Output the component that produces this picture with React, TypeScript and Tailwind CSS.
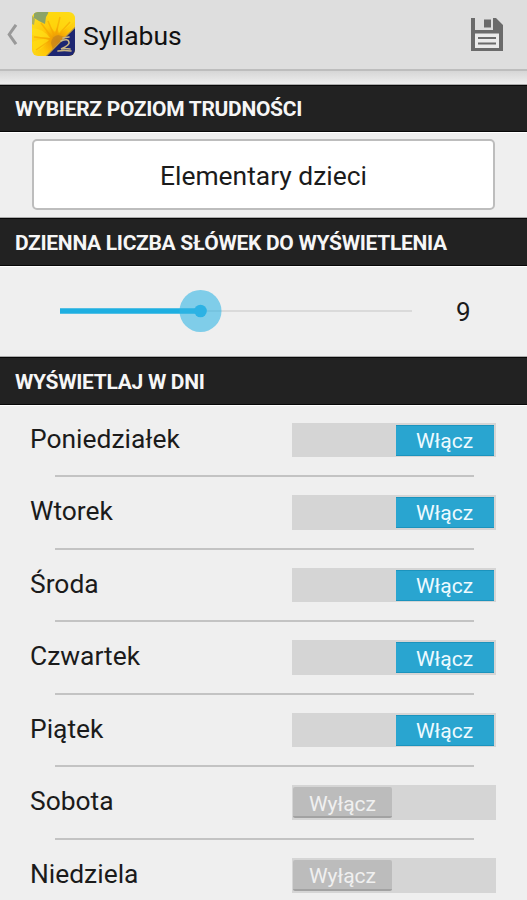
import { useState } from "react";

const initialDays = [
  { name: "Poniedziałek", on: true },
  { name: "Wtorek", on: true },
  { name: "Środa", on: true },
  { name: "Czwartek", on: true },
  { name: "Piątek", on: true },
  { name: "Sobota", on: false },
  { name: "Niedziela", on: false },
];

function SunflowerIcon() {
  return (
    <svg className="mb-[2px] ml-[14px] h-11 w-[43px] shrink-0" viewBox="0 0 43 44" preserveAspectRatio="none">
      <defs>
        <clipPath id="tile"><rect width="43" height="44" rx="6" /></clipPath>
        <radialGradient id="petals" cx="25" cy="29" r="32" gradientUnits="userSpaceOnUse">
          <stop offset="0" stopColor="#d58b0b" />
          <stop offset=".25" stopColor="#f6aa04" />
          <stop offset=".5" stopColor="#ffc808" />
          <stop offset="1" stopColor="#fbdc20" />
        </radialGradient>
      </defs>
      <g clipPath="url(#tile)">
        <rect width="43" height="44" fill="url(#petals)" />
        <path d="M2 0h15l-3 5-1 7-6-3-5-3z" fill="#8ba367" />
        <path d="M0 3l3 4-1 6-2-1z" fill="#b0b060" />
        <path d="M28 0Q38-1 43 5V9L27 22Q24 13 28 0z" fill="#ffdc12" fillOpacity=".7" />
        <path d="M16 0h11q1 10-4 20Q14 12 16 0z" fill="#ffd80d" fillOpacity=".7" />
        <path d="M0 16q12 1 18 10Q9 26 0 23z" fill="#ffe018" fillOpacity=".7" />
        <path d="M0 30q10-5 17-2Q11 37 2 40z" fill="#ffdd12" fillOpacity=".7" />
        <path d="M9 11l12 16M16 9l6 14M28 5l-4 17M38 10L27 22M2 25l18 2M4 38l16-11" fill="none" stroke="#f5a400" strokeWidth="1.5" strokeOpacity=".6" />
        <path d="M19 31q1-7 7-8l7 2-12 13z" fill="#c9851c" fillOpacity=".75" />
        <path d="M43 16v28H15z" fill="#1d2672" />
        <path d="M14 44L43 15" stroke="#b7994d" strokeWidth="1" />
        <path d="M29 29q7-3 8 1 1 3-8 7 4-1 9 0M26 39q6-1 13 0M31 26l6-1" fill="none" stroke="#c9b583" strokeWidth="1.6" strokeLinecap="round" />
      </g>
    </svg>
  );
}

function SaveIcon() {
  return (
    <svg className="h-[33px] w-8" viewBox="0 0 32 33">
      <path fill="#ebebeb" d="M4 15h24v15H4z" />
      <path fillRule="evenodd" fill="#6b6b6b" d="M0 0h4v12h18V0h3l7 7v26H0zM4 15.5h24V30H4z" />
      <path fill="#6b6b6b" d="M13 1.5h7v8h-7zM7 19h18v2H7zM7 24.5h18v2H7z" />
    </svg>
  );
}

function SectionTitle({ children }: { children: string }) {
  return (
    <h2 className="flex h-[47.5px] shrink-0 items-center border-y border-[#080808] bg-[#222] pt-[3px] pl-[15px] text-[21px] font-bold tracking-[-0.31px] text-[#f6f6f6] shadow-[0_1px_0_#fff,0_-1px_0_#aaa]">
      {children}
    </h2>
  );
}

function Toggle({ on, onClick }: { on: boolean; onClick: () => void }) {
  return (
    <button
      role="switch"
      aria-checked={on}
      onClick={onClick}
      className={"flex h-[34.5px] w-[203.5px] bg-[#d5d5d5] " + (on ? "justify-end pt-[2px] pr-[2px] pb-[1.5px]" : "pt-[2px] pb-[1.5px] pl-[1px]")}
    >
      <span
        className={
          "flex h-full items-center justify-center text-[21px] " +
          (on
            ? "w-[98px] border-y border-[#1b93bd] bg-[#29a5d0] pt-[3px] text-[#eefaff]"
            : "w-[99px] rounded-[2px] border-b-2 border-[#a2a2a2] bg-[#bcbcbc] pt-[5px] text-[#f0f0f0]")
        }
      >
        {on ? "Włącz" : "Wyłącz"}
      </span>
    </button>
  );
}

export default function App() {
  const [days, setDays] = useState(initialDays);
  const toggle = (i: number) => setDays(days.map((d, j) => (i === j ? { ...d, on: !d.on } : d)));

  return (
    <div className="flex h-[900px] w-[527px] flex-col overflow-hidden bg-[#efefef] font-['Roboto',sans-serif] text-[#1b1b1b]">
      <header className="flex h-[69px] shrink-0 items-center bg-[#dedede] pl-[7px] pr-6">
        <svg className="mb-px h-[21px] w-[11px]" viewBox="0 0 11 21">
          <path d="M9 .8L2.2 10.5 9 20.2" fill="none" stroke="#999" strokeWidth="3" />
        </svg>
        <SunflowerIcon />
        <h1 className="ml-2 pt-[2px] text-[26.5px] text-[#111]">Syllabus</h1>
        <button aria-label="Zapisz" className="ml-auto"><SaveIcon /></button>
      </header>
      <div className="h-[15.5px] shrink-0 border-t-2 border-[#bdbdbd] bg-linear-to-b from-[#d6d6d6] to-[#f0f0f0]" />
      <SectionTitle>WYBIERZ POZIOM TRUDNOŚCI</SectionTitle>
      <div className="flex h-[86px] shrink-0 px-8 pt-[7px]">
        <button className="h-[71px] w-full rounded-[5px] border-2 border-[#bdbdbd] bg-white pt-[4px] text-[26.4px]">Elementary dzieci</button>
      </div>
      <SectionTitle>DZIENNA LICZBA SŁÓWEK DO WYŚWIETLENIA</SectionTitle>
      <div className="flex h-[91.5px] shrink-0 items-center pl-[60px]">
        <svg className="h-[42px] w-[352px]" viewBox="0 0 352 42">
          <path d="M140 21h212" stroke="#dadada" strokeWidth="2" />
          <path d="M0 21h140" stroke="#1eafe1" strokeWidth="5.5" />
          <circle cx="140.5" cy="21" r="21" fill="#33b5e5" fillOpacity=".6" />
          <circle cx="140.5" cy="21" r="6.3" fill="#2db2e4" />
        </svg>
        <span className="ml-11 pt-[3px] text-[26px]">9</span>
      </div>
      <SectionTitle>WYŚWIETLAJ W DNI</SectionTitle>
      <ul>
        {days.map((day, i) => (
          <li key={day.name} className="flex h-[72.6px] flex-col">
            <div className="flex flex-1 items-start justify-between pt-[18px] pr-[31.5px] pl-[30px]">
              <span className="pt-px text-[26.4px] leading-[31px]">{day.name}</span>
              <Toggle on={day.on} onClick={() => toggle(i)} />
            </div>
            <div className="mr-[53px] ml-[55px] h-[2px] bg-[#c3c3c3]" />
          </li>
        ))}
      </ul>
    </div>
  );
}
